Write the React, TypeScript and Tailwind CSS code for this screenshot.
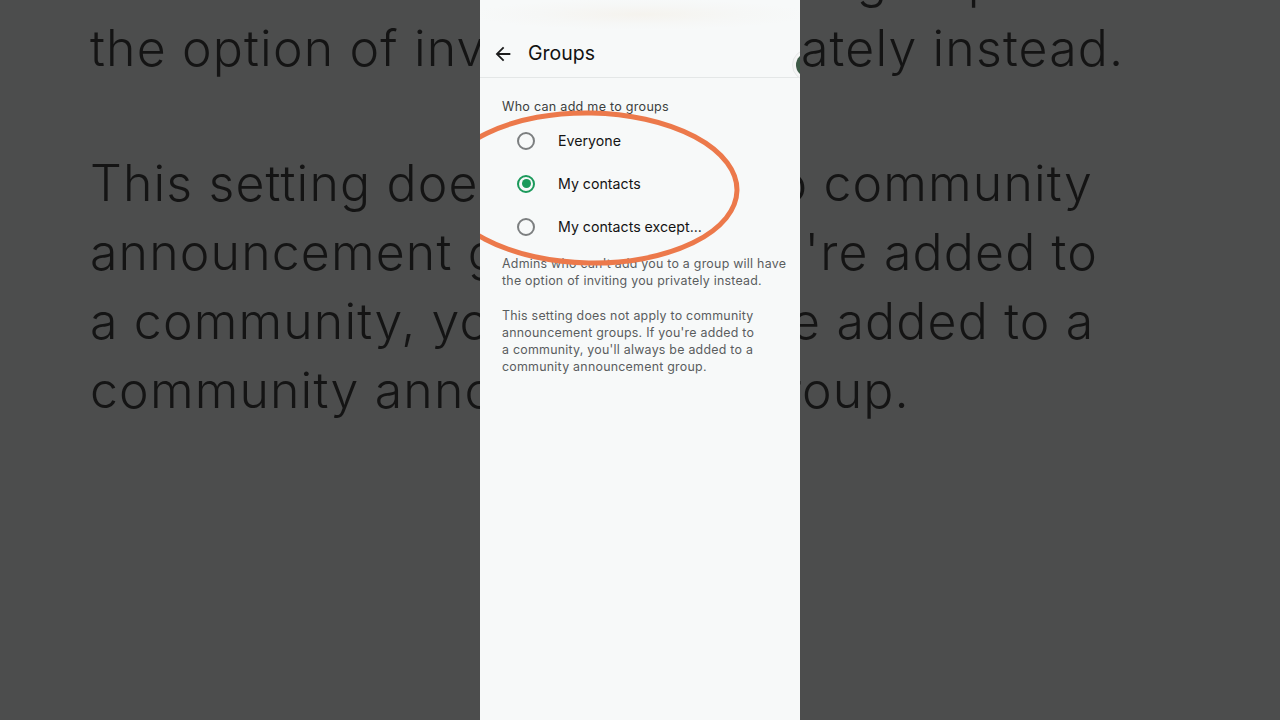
import React from "react";

const font = { fontFamily: "Inter, Roboto, 'Noto Sans', Arial, sans-serif" };

function Radio({ checked }: { checked?: boolean }) {
  return (
    <div
      className={
        "flex h-[18px] w-[18px] items-center justify-center rounded-full border-2 " +
        (checked ? "border-[#1b9a5b]" : "border-[#7c7f80]")
      }
    >
      {checked && <div className="h-[9px] w-[9px] rounded-full bg-[#1b9a5b]" />}
    </div>
  );
}

function Option({ label, checked }: { label: string; checked?: boolean }) {
  return (
    <div className="flex h-[43px] items-center">
      <div className="flex w-[68px] justify-center pl-[24px]">
        <Radio checked={checked} />
      </div>
      <span className="pl-[10px] text-[14.2px] text-[#141414]">{label}</span>
    </div>
  );
}

export default function App() {
  return (
    <div className="grid h-[720px] w-[1280px] overflow-hidden" style={font}>
      {/* blurred, zoomed background */}
      <div className="col-start-1 row-start-1 h-[720px] w-[1280px] overflow-hidden bg-[#4c4d4d]">
        <div className="mt-[-55px] pl-[90px] text-[50px] font-light leading-[69px] tracking-[1.15px] text-[#141414] whitespace-nowrap">
          <div>Admins who can't add you to a group will have</div>
          <div>the option of inviting you privately instead.</div>
          <div className="mt-[66px]">This setting does not apply to community</div>
          <div>announcement groups. If you're added to</div>
          <div>a community, you'll always be added to a</div>
          <div>community announcement group.</div>
        </div>
      </div>

      {/* phone screen */}
      <div className="relative col-start-1 row-start-1 flex h-[720px] w-[320px] flex-col justify-self-center overflow-hidden bg-[#f7f9f9]">
        <div className="h-[29px] bg-[radial-gradient(ellipse_at_center,#f5f3ee_0%,#f6f7f6_45%,#f7f9f9_75%)]" />
        <div className="flex h-[49px] items-center border-b border-[#e4e7e7]">
          <div className="flex w-[44px] justify-center pl-[1px] pt-[1px]">
            <svg width="22" height="22" viewBox="0 0 24 24" fill="#1c1c1c">
              <path d="M20 11H7.83l5.59-5.59L12 4l-8 8 8 8 1.41-1.41L7.83 13H20v-2z" />
            </svg>
          </div>
          <span className="pl-[4px] pt-[2px] text-[19.5px] text-[#121212]">Groups</span>
        </div>

        <div className="pl-[22px] pt-[20px] text-[12.6px] leading-[17px] tracking-[0.25px] text-[#3c3f40]">
          Who can add me to groups
        </div>
        <div className="mt-[4px] flex flex-col">
          <Option label="Everyone" />
          <Option label="My contacts" checked />
          <Option label="My contacts except..." />
        </div>

        <div className="mt-[7px] pl-[22px] pr-[4px] text-[12.4px] leading-[17.3px] tracking-[0.25px] text-[#5a5d5e]">
          <p>
            Admins who can't add you to a group will have
            <br />
            the option of inviting you privately instead.
          </p>
          <p className="mt-[17px]">
            This setting does not apply to community
            <br />
            announcement groups. If you're added to
            <br />
            a community, you'll always be added to a
            <br />
            community announcement group.
          </p>
        </div>

        {/* partially visible floating circle at right edge */}
        <div className="absolute left-[312px] top-[49px] flex h-[32px] w-[32px] items-center justify-center rounded-full border border-[#e6e8e8] bg-[#f4f5f5]">
          <div className="h-[24px] w-[24px] rounded-full bg-[#3d5a47]" />
        </div>

        {/* orange annotation ellipse */}
        <svg
          className="pointer-events-none absolute left-0 top-0"
          width="320"
          height="720"
          viewBox="0 0 320 720"
        >
          <ellipse
            cx="110"
            cy="188"
            rx="147"
            ry="75"
            transform="rotate(1 110 188)"
            fill="none"
            stroke="#ec794b"
            strokeWidth="5"
          />
        </svg>
      </div>
    </div>
  );
}
